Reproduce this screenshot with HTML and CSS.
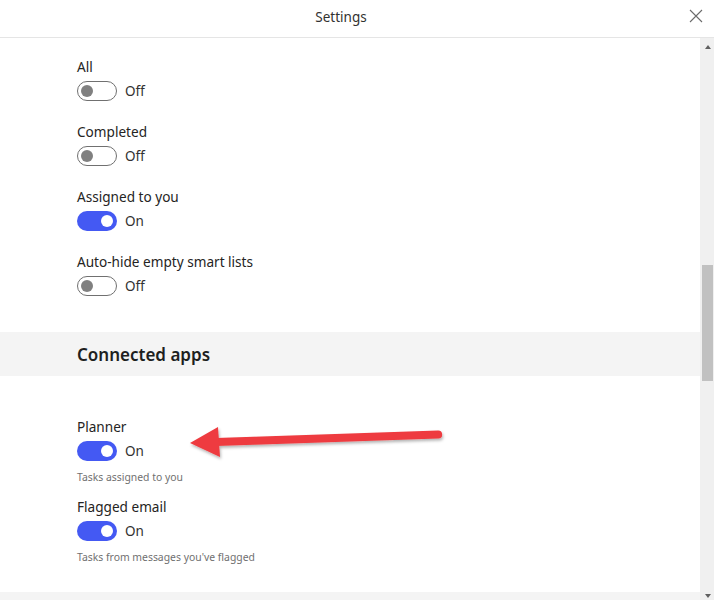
FILE: index.html
```html
<!DOCTYPE html>
<html lang="en">
<head>
<meta charset="utf-8">
<title>Settings</title>
<link rel="stylesheet" href="styles.css">
</head>
<body>
<div class="dialog">
  <header class="header">
    <h1 class="title">Settings</h1>
    <button class="close" aria-label="Close">
      <svg width="14" height="14" viewBox="0 0 14 14"><path d="M1 1 L13 13 M13 1 L1 13" stroke="#6b6b6b" stroke-width="1.1" fill="none"/></svg>
    </button>
  </header>
  <div class="body">
    <div class="content">
      <div class="group">
        <div class="item">
          <div class="label">All</div>
          <div class="toggle-row"><span class="toggle off"><span class="knob"></span></span><span class="state">Off</span></div>
        </div>
        <div class="item">
          <div class="label">Completed</div>
          <div class="toggle-row"><span class="toggle off"><span class="knob"></span></span><span class="state">Off</span></div>
        </div>
        <div class="item">
          <div class="label">Assigned to you</div>
          <div class="toggle-row"><span class="toggle on"><span class="knob"></span></span><span class="state">On</span></div>
        </div>
        <div class="item">
          <div class="label">Auto-hide empty smart lists</div>
          <div class="toggle-row"><span class="toggle off"><span class="knob"></span></span><span class="state">Off</span></div>
        </div>
      </div>
      <div class="section-band"><h2 class="section-title">Connected apps</h2></div>
      <div class="group apps">
        <div class="item">
          <div class="label">Planner</div>
          <div class="toggle-row"><span class="toggle on"><span class="knob"></span></span><span class="state">On</span></div>
          <div class="hint">Tasks assigned to you</div>
        </div>
        <div class="item">
          <div class="label">Flagged email</div>
          <div class="toggle-row"><span class="toggle on"><span class="knob"></span></span><span class="state">On</span></div>
          <div class="hint">Tasks from messages you've flagged</div>
        </div>
      </div>
      <div class="bottom-band"></div>
      <svg class="arrow" width="270" height="50" viewBox="0 0 270 50">
        <defs>
          <filter id="sh" x="-10%" y="-40%" width="120%" height="180%">
            <feDropShadow dx="1" dy="2" stdDeviation="1.5" flood-color="#000" flood-opacity="0.3"/>
          </filter>
        </defs>
        <g filter="url(#sh)" fill="#ee3b3f">
          <path d="M28 17 L250 9.5 A4 4 0 0 1 250.3 17.5 L28 25 Z"/>
          <path d="M2 22 L30 6 L32 36 Z"/>
        </g>
      </svg>
    </div>
    <div class="scrollbar">
      <span class="arrow-up"></span>
      <div class="track"><div class="thumb"></div></div>
      <span class="arrow-down"></span>
    </div>
  </div>
</div>
</body>
</html>
```

FILE: styles.css
```css
* { box-sizing: border-box; }
html, body { margin: 0; padding: 0; }
body {
  font-family: "Noto Sans", "Open Sans", sans-serif;
  color: #252423;
  background: #fff;
  width: 714px;
  height: 600px;
  overflow: hidden;
}
.dialog { display: flex; flex-direction: column; height: 600px; }
.header {
  height: 38px;
  border-bottom: 1px solid #e5e5e5;
  display: flex;
  align-items: center;
  justify-content: center;
  position: relative;
  flex: none;
  padding-right: 32px;
}
.title {
  margin: 0;
  font-size: 13.5px;
  font-weight: 400;
  color: #323130;
  margin-top: -4px;
}
.close {
  position: absolute;
  right: 11px;
  top: 9px;
  width: 14px;
  height: 14px;
  padding: 0;
  border: 0;
  background: none;
  display: flex;
}
.body { flex: 1; display: flex; min-height: 0; }
.content { flex: 1; position: relative; display: flex; flex-direction: column; }
.group { padding: 19px 0 15px 77px; }
.item { margin-bottom: 21px; }
.label { font-size: 13.6px; line-height: 20px; color: #252423; }
.toggle-row { display: flex; align-items: center; gap: 8px; margin-top: 4px; height: 20px; }
.toggle {
  width: 40px;
  height: 20px;
  border-radius: 10px;
  display: flex;
  align-items: center;
  padding: 0 4px;
}
.toggle .knob { width: 12px; height: 12px; border-radius: 50%; }
.toggle.off { border: 1px solid #707070; background: #fff; padding: 0 3px; }
.toggle.off .knob { background: #808080; }
.toggle.on { background: #4459f3; justify-content: flex-end; }
.toggle.on .knob { background: #fff; }
.state { font-size: 13.5px; color: #323130; line-height: 20px; }
.section-band {
  background: #f4f4f4;
  height: 44px;
  display: flex;
  align-items: center;
  padding-left: 77px;
}
.section-title { margin: 0; font-size: 17px; font-weight: 600; color: #201f1e; }
.apps { padding-top: 41px; padding-bottom: 0; }
.apps .item { margin-bottom: 12px; }
.hint { font-size: 10.4px; color: #707070; margin-top: 8px; line-height: 16px; }
.bottom-band { margin-top: auto; height: 8px; background: #f4f4f4; }
.arrow { position: absolute; left: 188px; top: 383px; }
.scrollbar {
  width: 14px;
  background: #f0f0f0;
  display: flex;
  flex-direction: column;
  align-items: center;
  flex: none;
}
.arrow-up, .arrow-down { width: 0; height: 0; border-left: 3.5px solid transparent; border-right: 3.5px solid transparent; margin: 7px 0 4px 1px; }
.arrow-up { border-bottom: 4px solid #606060; }
.arrow-down { border-top: 4px solid #606060; margin: 4px 0 2px 1px; }
.track { flex: 1; width: 100%; padding-top: 212px; display: flex; justify-content: flex-end; padding-right: 1px; }
.thumb { width: 11px; height: 116px; background: #c1c1c1; }
```
